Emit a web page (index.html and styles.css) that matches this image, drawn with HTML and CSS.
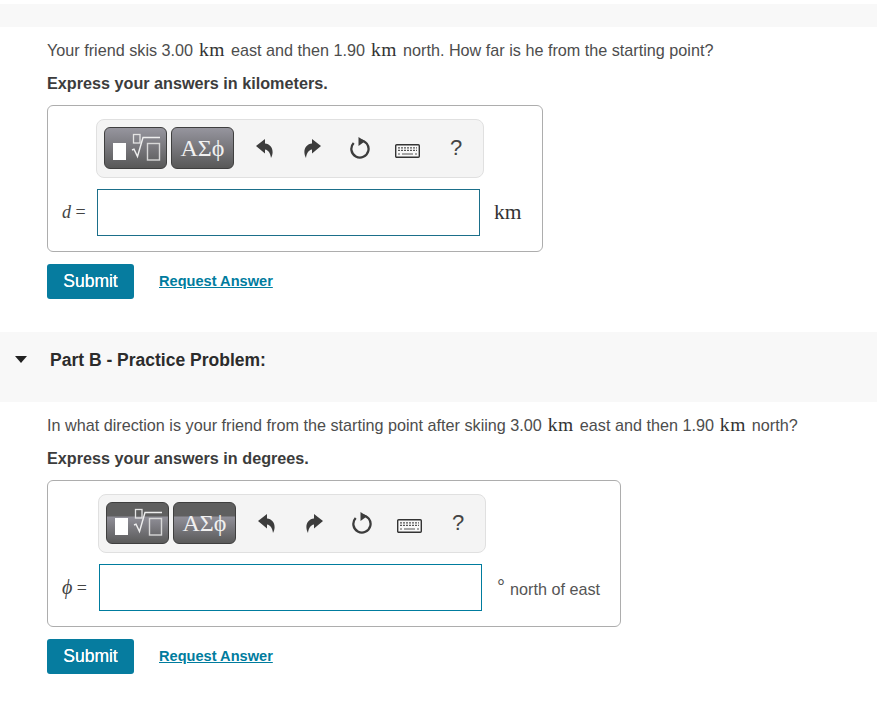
FILE: index.html
```html
<!DOCTYPE html>
<html lang="en">
<head>
<meta charset="utf-8">
<title>Part B - Practice Problem</title>
<link rel="stylesheet" href="styles.css">
</head>
<body>
<svg class="defs" width="0" height="0" aria-hidden="true">
  <defs>
    <symbol id="i-undo" viewBox="0 0 17 19"><path d="M0 7 9 0v4.500c4.500.4 7.800 4 7.600 9-.1 2-.8 4-1.600 5.500-.6-4.600-2.400-7.800-6-8.400v4z" fill="#3c3c3c"/></symbol>
    <symbol id="i-redo" viewBox="0 0 18 19"><path d="M18 7 9 0v4.500C4.500 4.900 1.200 8.500 1.400 13.500c.1 2 .8 4 1.600 5.500.6-4.600 2.400-7.800 6-8.400v4z" fill="#3c3c3c"/></symbol>
    <symbol id="i-reset" viewBox="0 0 20 22"><path d="M10 3.300a8.600 8.600 0 1 1-6.300 2.700" fill="none" stroke="#3c3c3c" stroke-width="2.300"/><path d="M8.500 0 15 4.300 8.500 9z" fill="#3c3c3c"/></symbol>
    <symbol id="i-keys" viewBox="0 0 25 14">
      <rect x=".7" y=".7" width="23.600" height="12.600" rx="1" fill="#f8f8f8" stroke="#333" stroke-width="1.400"/>
      <path d="M3 3.800h19M3 6.300h19" stroke="#555" stroke-width="1.200" stroke-dasharray="2 1"/>
      <path d="M3 10h2M7 10h11M20 10h2" stroke="#555" stroke-width="1.200"/>
    </symbol>
    <symbol id="i-template" viewBox="1 1 61 40">
      <rect x="9" y="16" width="13" height="17" fill="#fff"/>
      <rect x="29.500" y="7.500" width="6.500" height="8.500" fill="none" stroke="#e4e4e4" stroke-width="1.300"/>
      <path d="M28 23l2-.8 3.500 7.300L39 10.500h17" fill="none" stroke="#eee" stroke-width="1.400"/>
      <rect x="43.500" y="16.500" width="12" height="16.500" fill="none" stroke="#d8d8d8" stroke-width="1.400"/>
    </symbol>
  </defs>
</svg>

<div class="band band-top"></div>

<section class="part">
  <p class="prompt">Your friend skis 3.00 <span class="unit">km</span> east and then 1.90 <span class="unit">km</span> north. How far is he from the starting point?</p>
  <p class="instruction">Express your answers in kilometers.</p>
  <div class="answer answer-a">
    <div class="toolbar">
      <button class="tool tool-light"><svg class="tpl"><use href="#i-template"/></svg></button>
      <button class="tool tool-light tool-greek">ΑΣϕ</button>
      <div class="actions">
        <svg class="ic ic-undo"><use href="#i-undo"/></svg>
        <svg class="ic ic-redo"><use href="#i-redo"/></svg>
        <svg class="ic ic-reset"><use href="#i-reset"/></svg>
        <svg class="ic ic-keys"><use href="#i-keys"/></svg>
        <span class="help">?</span>
      </div>
    </div>
    <div class="row">
      <span class="label"><i>d</i> =</span>
      <div class="field"></div>
      <span class="unit unit-large">km</span>
    </div>
  </div>
  <div class="submit-row">
    <button class="submit">Submit</button>
    <a class="request" href="#">Request Answer</a>
  </div>
</section>

<div class="band band-part">
  <svg class="caret" width="12" height="7" viewBox="0 0 12 7"><path d="M0 0h12L6 7z" fill="#222"/></svg>
  <h2 class="part-title">Part B - Practice Problem:</h2>
</div>

<section class="part">
  <p class="prompt">In what direction is your friend from the starting point after skiing 3.00 <span class="unit">km</span> east and then 1.90 <span class="unit">km</span> north?</p>
  <p class="instruction">Express your answers in degrees.</p>
  <div class="answer answer-b">
    <div class="toolbar">
      <button class="tool tool-dark"><svg class="tpl"><use href="#i-template"/></svg></button>
      <button class="tool tool-dark tool-greek">ΑΣϕ</button>
      <div class="actions">
        <svg class="ic ic-undo"><use href="#i-undo"/></svg>
        <svg class="ic ic-redo"><use href="#i-redo"/></svg>
        <svg class="ic ic-reset"><use href="#i-reset"/></svg>
        <svg class="ic ic-keys"><use href="#i-keys"/></svg>
        <span class="help">?</span>
      </div>
    </div>
    <div class="row">
      <span class="label"><i>ϕ</i> =</span>
      <div class="field field-active"></div>
      <span class="suffix"><span class="deg">°</span><span>north of east</span></span>
    </div>
  </div>
  <div class="submit-row">
    <button class="submit">Submit</button>
    <a class="request" href="#">Request Answer</a>
  </div>
</section>
</body>
</html>
```

FILE: styles.css
```css
* { box-sizing: border-box; }

html, body { margin: 0; padding: 0; }

body {
  background: #fff;
  color: #4d4d4d;
  font-family: "Liberation Sans", Arial, sans-serif;
  font-size: 16.200px;
  padding-top: 4px;
}

.defs { position: absolute; }

.band { background: #f8f8f8; }

.band-top { height: 23px; }

.band-part {
  height: 70px;
  margin-top: 33px;
  display: flex;
  align-items: flex-start;
  padding: 24px 0 0 15px;
}

.caret { margin-right: 23px; flex: none; }

.part-title {
  margin: -8px 0 0;
  font-size: 17.500px;
  line-height: 24px;
  font-weight: 700;
  color: #2c2c2c;
}

.part { padding-left: 47px; }

.prompt {
  margin: 0;
  padding-top: 13px;
  height: 46px;
  line-height: 20px;
  white-space: nowrap;
}

.unit {
  font-family: "Liberation Serif", serif;
  font-size: 19.500px;
  letter-spacing: .7px;
  margin: 0 1.300px;
  color: #333;
}

.instruction {
  margin: 0;
  height: 32px;
  line-height: 20px;
  font-weight: 700;
  color: #3c3c3c;
}

.answer {
  width: fit-content;
  border: 1px solid #adadad;
  border-radius: 6px;
  padding: 13px 21px 15px 0;
}

.answer-b { padding-right: 20px; }

.toolbar {
  width: 388px;
  height: 59px;
  background: #f4f4f4;
  border: 1px solid #e0e0e0;
  border-radius: 8px;
  display: flex;
  align-items: flex-start;
  gap: 4px;
  padding: 7px 0 0 7px;
}

.answer-a .toolbar { margin-left: 48px; }
.answer-b .toolbar { margin-left: 50px; }

.tool {
  width: 63px;
  height: 42px;
  padding: 0;
  border: 1px solid #3f3f3f;
  border-radius: 6px;
  display: flex;
  align-items: center;
  justify-content: center;
  color: #f0f0f0;
  flex: none;
}

.tool-light { background: linear-gradient(#96959e, #585858); }
.tool-dark { background: linear-gradient(#5f5f5f 0 13px, #908f98 14px, #5a5a5a); }

.tool-greek {
  font-family: "Liberation Serif", serif;
  font-size: 24px;
  line-height: 1;
}

.tpl { width: 61px; height: 40px; display: block; }

.actions {
  flex: 1;
  height: 42px;
  display: flex;
  align-items: center;
  padding-left: 18px;
}

.ic { display: block; flex: none; }
.ic-undo { width: 17px; height: 19px; margin-right: 30px; }
.ic-redo { width: 18px; height: 19px; margin-right: 29px; }
.ic-reset { width: 20px; height: 22px; margin-right: 25px; }
.ic-keys { width: 25px; height: 14px; margin: 5px 30px 0 0; }

.help { font-size: 22px; line-height: 1; color: #444; }

.row {
  display: flex;
  align-items: center;
  margin-top: 11px;
}

.label {
  font-family: "Liberation Serif", serif;
  font-size: 18px;
  color: #444;
  padding-left: 14px;
  white-space: nowrap;
}

.answer-a .label { width: 49px; }
.answer-b .label { width: 51px; }
.answer-b .label i { font-size: 20px; }

.field {
  width: 383px;
  height: 47px;
  border: 1px solid #1b6f8a;
  background: #fff;
}

.field-active { border-color: #007c9e; }

.unit-large { margin: 0 0 0 14px; font-size: 21.500px; letter-spacing: 0; }

.suffix {
  margin-left: 15px;
  padding-top: 3px;
  display: flex;
  align-items: center;
  white-space: nowrap;
  color: #555;
}

.deg { font-size: 20px; line-height: 1; margin: -5px 5px 0 0; }

.submit-row {
  display: flex;
  align-items: center;
  gap: 25px;
  margin-top: 12px;
}

.submit {
  width: 87px;
  height: 35px;
  padding: 0;
  border: 0;
  border-radius: 3px;
  background: #067c9f;
  color: #fff;
  font-family: "Liberation Sans", Arial, sans-serif;
  font-size: 17.500px;
  text-shadow: 0 0 .5px #fff;
}

.request {
  color: #007c9e;
  font-size: 14.600px;
  font-weight: 700;
  margin-bottom: 2px;
}
```
